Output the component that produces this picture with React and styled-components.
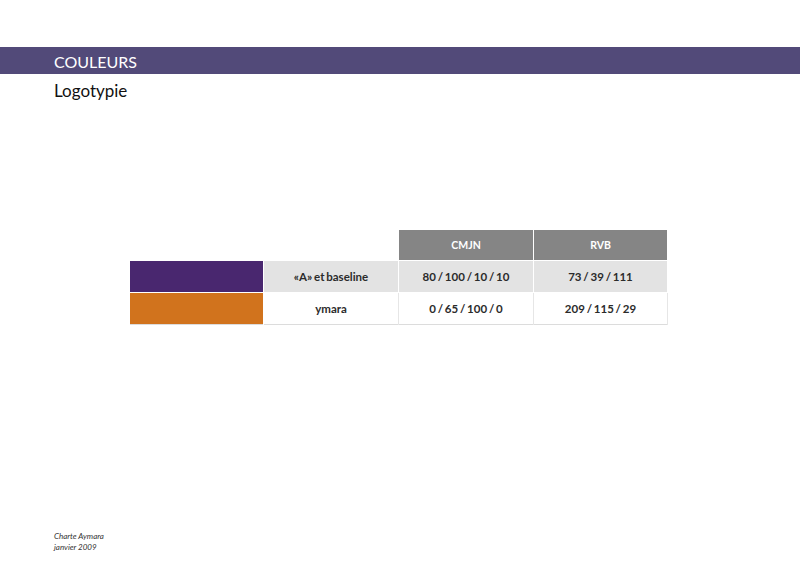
import React from "react";
import styled, { createGlobalStyle } from "styled-components";

const Global = createGlobalStyle`
  html, body { margin: 0; padding: 0; background: #fff; }
  body { font-family: Lato, "Open Sans", sans-serif; }
`;

const Page = styled.div`
  width: 800px;
  height: 565px;
  display: flex;
  flex-direction: column;
  overflow: hidden;
`;

const Banner = styled.div`
  margin-top: 47px;
  height: 27px;
  background: #524a79;
  display: flex;
  align-items: center;
  padding-left: 54px;
  color: #fff;
  font-family: Lato, sans-serif;
  font-size: 16px;
  padding-top: 1px;
  box-sizing: border-box;
`;

const Subtitle = styled.h1`
  margin: 4px 0 0 54px;
  font-family: Lato, sans-serif;
  font-weight: 400;
  font-size: 17px;
  line-height: 26px;
  color: #111;
`;

const Table = styled.div`
  margin: 126px 0 0 130px;
  display: grid;
  grid-template-columns: 133px 134px 134px 133px;
  column-gap: 1px;
  row-gap: 1px;
  width: 537px;
`;

const Cell = styled.div`
  height: ${(p) => p.$h}px;
  display: flex;
  align-items: center;
  justify-content: center;
  font-family: Lato, "Open Sans", sans-serif;
  font-weight: 700;
  font-size: ${(p) => (p.$head ? 10.5 : 11.5)}px;
  word-spacing: -1px;
  color: ${(p) => (p.$head ? "#fff" : "#2b2b2b")};
  background: ${(p) => p.$bg || "transparent"};
  box-sizing: border-box;
  border-bottom: ${(p) => (p.$line ? "1px solid #dcdcdc" : "none")};
  box-shadow: ${(p) => (p.$sep ? "1px 0 0 #e6e6e6" : "none")};
`;

const Footer = styled.div`
  margin-top: auto;
  margin-bottom: 12px;
  padding-left: 54px;
  font-family: Lato, sans-serif;
  font-style: italic;
  font-size: 8px;
  line-height: 11px;
  color: #333;
`;

const rows = [
  { swatch: "#49276f", name: "«A» et baseline", cmjn: "80 / 100 / 10 / 10", rvb: "73 / 39 / 111", bg: "#e3e3e3" },
  { swatch: "#d1731d", name: "ymara", cmjn: "0 / 65 / 100 / 0", rvb: "209 / 115 / 29", bg: "#fff" },
];

export default function App() {
  return (
    <Page>
      <Global />
      <Banner>COULEURS</Banner>
      <Subtitle>Logotypie</Subtitle>
      <Table>
        <Cell $h={30} />
        <Cell $h={30} />
        <Cell $h={30} $head $bg="#858585">CMJN</Cell>
        <Cell $h={30} $head $bg="#858585">RVB</Cell>
        {rows.map((r, i) => {
          const white = r.bg === "#fff";
          const h = i === 0 ? 31 : 32;
          return (
            <React.Fragment key={i}>
              <Cell $h={h} $bg={r.swatch} $line={white} />
              <Cell $h={h} $bg={r.bg} $line={white} $sep={white}>{r.name}</Cell>
              <Cell $h={h} $bg={r.bg} $line={white} $sep={white}>{r.cmjn}</Cell>
              <Cell $h={h} $bg={r.bg} $line={white} $sep={white}>{r.rvb}</Cell>
            </React.Fragment>
          );
        })}
      </Table>
      <Footer>
        Charte Aymara
        <br />
        janvier 2009
      </Footer>
    </Page>
  );
}
